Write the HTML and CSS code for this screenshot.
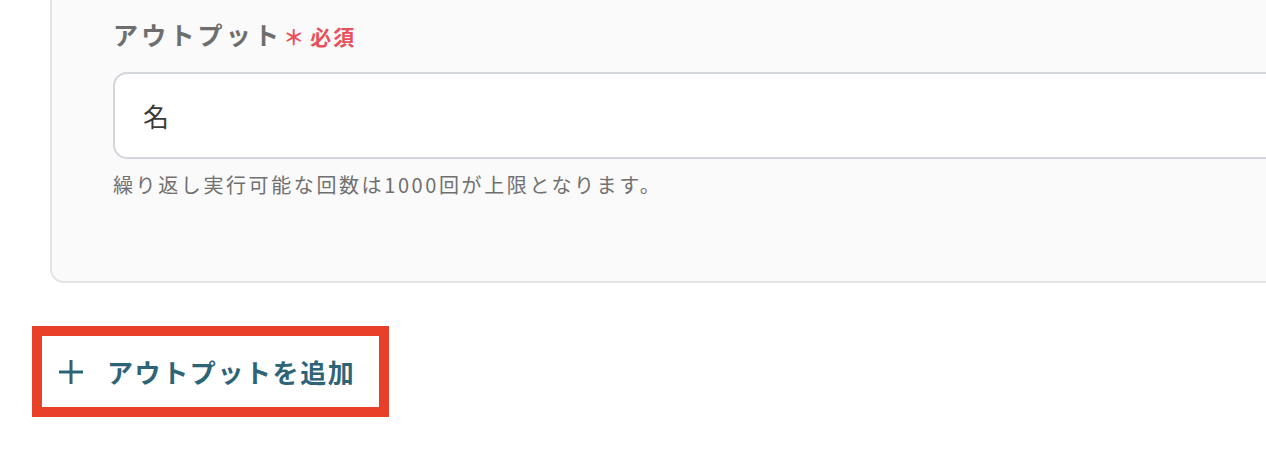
FILE: index.html
```html
<!DOCTYPE html>
<html lang="ja">
<head>
<meta charset="utf-8">
<link rel="stylesheet" href="styles.css">
</head>
<body>
<div class="page">
  <div class="panel">
    <div class="label">アウトプット<span class="req"><span class="ast">＊</span>必須</span></div>
    <div class="input">名</div>
    <div class="help">繰り返し実行可能な回数は1000回が上限となります。</div>
  </div>
  <div class="addbox">
    <div class="addbtn">
      <svg class="plus" width="26" height="26" viewBox="0 0 26 26"><path d="M13 1V25M1 13H25" stroke="#2e6478" stroke-width="3" fill="none"/></svg>
      <span class="addtext">アウトプットを追加</span>
    </div>
  </div>
</div>
</body>
</html>
```

FILE: styles.css
```css
html, body {
  margin: 0;
  padding: 0;
  background: #ffffff;
  overflow: hidden;
}
body {
  width: 1266px;
  height: 466px;
  font-family: "Noto Sans CJK JP", "Noto Sans", sans-serif;
}
.page {
  display: flex;
  flex-direction: column;
}
.panel {
  margin-left: 50px;
  margin-top: -30px;
  width: 1300px;
  height: 313px;
  box-sizing: border-box;
  border: 2px solid #e4e4e4;
  border-radius: 14px;
  background: #fafafa;
  padding: 46px 0 0 61px;
  display: flex;
  flex-direction: column;
}
.label {
  font-size: 25px;
  font-weight: 700;
  color: #6e6e6e;
  line-height: 32px;
  letter-spacing: 3.2px;
  display: flex;
  align-items: baseline;
}
.req {
  font-size: 21px;
  color: #e8505b;
  letter-spacing: 2px;
  margin-left: 1px;
}
.ast {
  margin-right: 4px;
}
.input {
  margin-top: 20px;
  height: 87px;
  box-sizing: border-box;
  border: 2px solid #d3d7dc;
  border-radius: 14px;
  background: #ffffff;
  padding-left: 28px;
  display: flex;
  align-items: center;
  font-size: 26px;
  color: #3a3a3a;
}
.help {
  margin-top: 12px;
  font-size: 20px;
  color: #707070;
  line-height: 28px;
  letter-spacing: 2.6px;
}
.addbox {
  margin-left: 32px;
  margin-top: 43px;
  width: 357px;
  height: 91px;
  box-sizing: border-box;
  border: 10px solid #e8412a;
}
.addbtn {
  height: 100%;
  display: flex;
  align-items: center;
  padding-left: 16px;
}
.plus {
  display: block;
}
.addtext {
  margin-left: 23px;
  font-size: 26px;
  font-weight: 700;
  color: #2e6478;
  letter-spacing: 1.6px;
}
```
